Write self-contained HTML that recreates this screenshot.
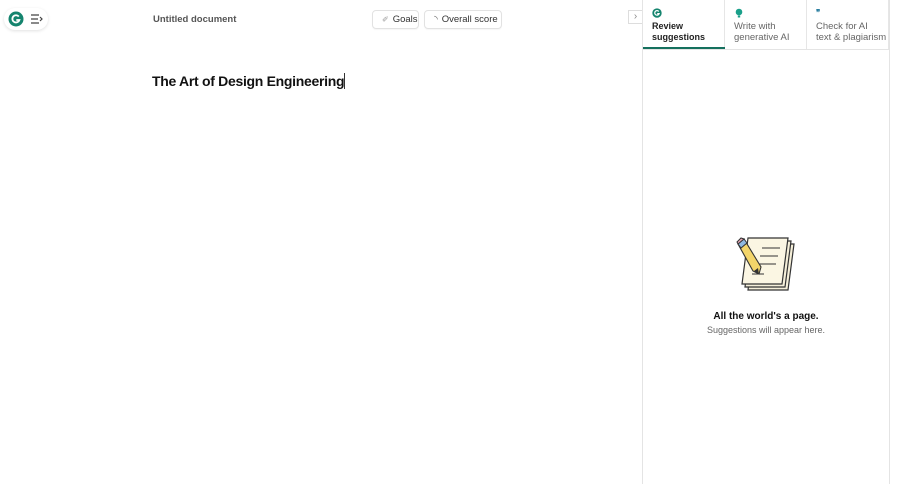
<!DOCTYPE html>
<html><head><meta charset="utf-8"><style>
*{margin:0;padding:0;box-sizing:border-box}
body{width:900px;height:484px;background:#fff;font-family:"Liberation Sans",sans-serif;position:relative;overflow:hidden;color:#1e1e1e}
.abs{position:absolute}
.btn{position:absolute;top:10px;height:19px;border:1px solid #e2e2e2;border-radius:4px;font-size:9.5px;color:#333;display:flex;align-items:center;padding-left:9px;box-shadow:0 1px 1px rgba(0,0,0,.04)}
.tab{position:absolute;top:0;height:49px;width:82px;font-size:9.5px;line-height:11px;padding:8px 0 0 9px;color:#666;border-right:1px solid #e6e6e6}
</style></head><body>
<div class="abs" style="left:4px;top:8px;width:44px;height:22px;border-radius:11px;box-shadow:0 1px 3px rgba(0,0,0,.12);background:#fff"></div>
<svg class="abs" style="left:8px;top:11px" width="16" height="16" viewBox="0 0 16 16"><circle cx="8" cy="8" r="7.5" fill="#15846e"/><path d="M10.8 5.6A3.6 3.6 0 1 0 11.4 9H8.3" stroke="#fff" stroke-width="1.8" fill="none"/></svg>
<svg class="abs" style="left:31px;top:14px" width="12" height="10" viewBox="0 0 12 10"><path d="M0 1h8M0 5h7M0 9h8M9 3l2 2-2 2" stroke="#444" stroke-width="1.2" fill="none"/></svg>
<div class="abs" style="left:153px;top:14px;font-size:9.5px;font-weight:bold;color:#555">Untitled document</div>
<div class="btn" style="left:372px;width:47px"><span style="color:#999;font-size:8px;margin-right:4px">✐</span>Goals</div>
<div class="btn" style="left:424px;width:78px"><span style="color:#666;margin-right:4px">◝</span>Overall score</div>
<div class="abs" style="left:152px;top:73px;font-size:14px;font-weight:bold;color:#111;letter-spacing:-0.3px">The Art of Design Engineering<span style="display:inline-block;width:1px;height:16px;background:#333;vertical-align:-3px"></span></div>
<div class="abs" style="left:628px;top:10px;width:14px;height:14px;border:1px solid #ddd;border-right:none;font-size:10px;color:#888;text-align:center;line-height:12px">›</div>
<div class="abs" style="left:642px;top:0;width:1px;height:484px;background:#e4e4e4"></div>
<div class="abs" style="left:889px;top:0;width:1px;height:484px;background:#e4e4e4"></div>
<div class="abs" style="left:643px;top:49px;width:246px;height:1px;background:#e4e4e4"></div>
<div class="tab" style="left:643px;color:#222;font-weight:bold;font-size:9px">
<svg width="10" height="10" viewBox="0 0 16 16" style="display:block;margin-bottom:3px"><circle cx="8" cy="8" r="7.5" fill="#15846e"/><path d="M10.8 5.6A3.6 3.6 0 1 0 11.4 9H8.3" stroke="#fff" stroke-width="2" fill="none"/></svg>Review<br>suggestions</div>
<div class="abs" style="left:643px;top:47px;width:82px;height:2px;background:#15705e"></div>
<div class="tab" style="left:725px"><svg width="10" height="10" viewBox="0 0 10 10" style="display:block;margin-bottom:3px"><circle cx="5" cy="4" r="3.3" fill="#1aa08a"/><rect x="3.8" y="7.5" width="2.4" height="2" fill="#1aa08a"/></svg>Write with<br>generative AI</div>
<div class="tab" style="left:807px"><div style="font-size:8px;color:#2a7ea0;font-weight:bold;height:10px;margin-bottom:3px;line-height:10px">❞</div>Check for AI<br>text &amp; plagiarism</div>
<svg class="abs" style="left:736px;top:236px" width="62" height="56" viewBox="0 0 62 56">
<path d="M18 8h40l-6 46H12z" fill="#f5efd9" stroke="#333" stroke-width="1.2"/>
<path d="M15 5h40l-6 46H9z" fill="#f5efd9" stroke="#333" stroke-width="1.2"/>
<path d="M12 2h40l-6 46H6z" fill="#fbf6e3" stroke="#333" stroke-width="1.2"/>
<path d="M26 12h18M24 20h18M22 28h18M16 38h12" stroke="#333" stroke-width="1"/>
<path d="M2 8l6-5 17 28-2 7-6-3z" fill="#f3d56a" stroke="#333" stroke-width="1.1"/>
<path d="M2 8l6-5 3 4-6 5z" fill="#8fb8df" stroke="#333" stroke-width="1"/>
<path d="M1 6l4-4 3 1-6 5z" fill="#e7a9b6" stroke="#333" stroke-width="1"/>
<path d="M18 35l5 3-1-6z" fill="#333"/>
</svg>
<div class="abs" style="left:643px;top:311px;width:246px;text-align:center;font-size:10px;font-weight:bold;color:#111">All the world's a page.</div>
<div class="abs" style="left:643px;top:325px;width:246px;text-align:center;font-size:9px;color:#666">Suggestions will appear here.</div>
</body></html>
